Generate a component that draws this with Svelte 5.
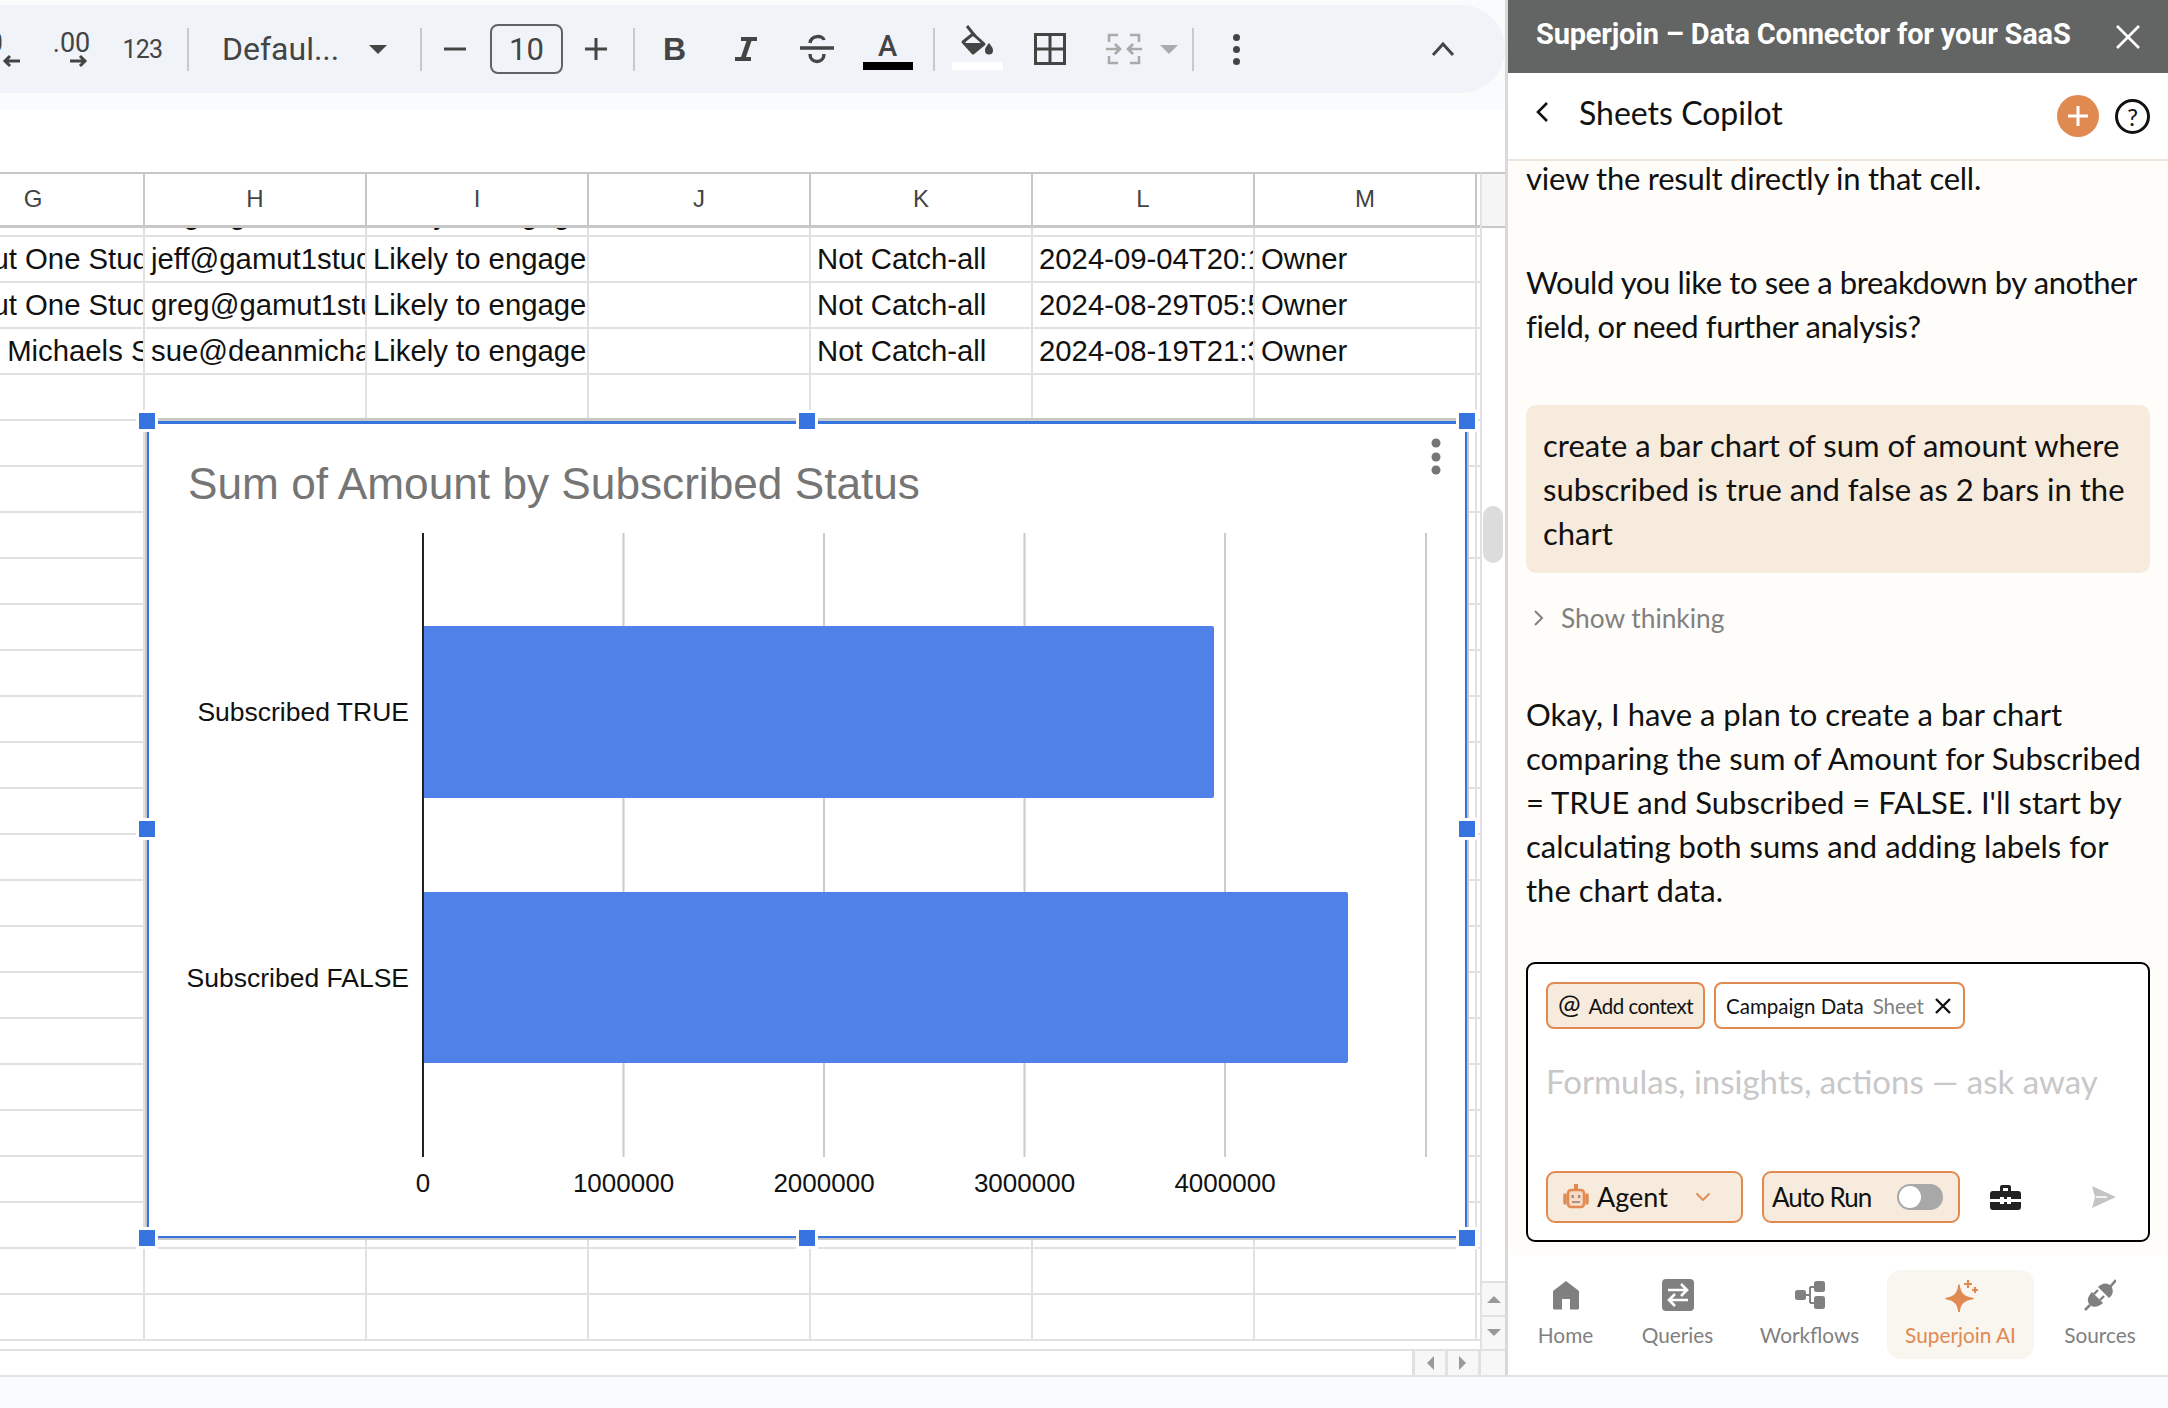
<script>
	const columns = ['G', 'H', 'I', 'J', 'K', 'L', 'M'];
	const rows = [
		['Gamut One Studio', 'jeff@gamut1studio.com', 'Likely to engage', '', 'Not Catch-all', '2024-09-04T20:11:32', 'Owner'],
		['Gamut One Studio', 'greg@gamut1studio.com', 'Likely to engage', '', 'Not Catch-all', '2024-08-29T05:54:10', 'Owner'],
		['Dean Michaels Studio', 'sue@deanmichaels.com', 'Likely to engage', '', 'Not Catch-all', '2024-08-19T21:37:45', 'Owner']
	];
	const cutRow = ['', 'ang@gamut1studio.com', 'Likely to engage', '', '', '', ''];
	const emptyRows = Array.from({ length: 21 }, () => columns.map(() => ''));
	const ticks = [
		{ x: 423, label: '0' },
		{ x: 623.5, label: '1000000' },
		{ x: 824, label: '2000000' },
		{ x: 1024.5, label: '3000000' },
		{ x: 1225, label: '4000000' },
		{ x: 1426, label: '' }
	];
	const bars = [
		{ y: 626, h: 172, w: 791, label: 'Subscribed TRUE' },
		{ y: 892, h: 171, w: 925, label: 'Subscribed FALSE' }
	];
	const handles = [
		[147, 421], [807, 421], [1467, 421],
		[147, 829], [1467, 829],
		[147, 1238], [807, 1238], [1467, 1238]
	];
	const tabs = [
		{ name: 'Home', width: 115 },
		{ name: 'Queries', width: 109 },
		{ name: 'Workflows', width: 155 },
		{ name: 'Superjoin AI', width: 147, active: true },
		{ name: 'Sources', width: 132 }
	];
</script>

<div class="page">
	<div class="top">
		<main class="sheet">
			<div class="toolbar-band">
				<div class="toolbar">
					<div class="tool first">
						<span class="dec">0</span>
						<svg class="dec-arrow" width="20" height="14" viewBox="0 0 20 14"><path d="M19 7H4M9 2 4 7l5 5" fill="none" stroke="#444" stroke-width="3"/></svg>
					</div>
					<div class="tool">
						<div class="dec-stack">
							<span>.00</span>
							<svg width="20" height="14" viewBox="0 0 20 14"><path d="M1 7h15M11 2l5 5-5 5" fill="none" stroke="#444" stroke-width="3"/></svg>
						</div>
					</div>
					<div class="tool num">123</div>
					<span class="sep first-sep"></span>
					<div class="font-select">
						<span>Defaul...</span>
						<i class="caret"></i>
					</div>
					<span class="sep after-font"></span>
					<div class="tool step">
						<svg width="22" height="22" viewBox="0 0 22 22"><path d="M0 11h22" stroke="#444" stroke-width="3"/></svg>
					</div>
					<div class="size-box">10</div>
					<div class="tool step">
						<svg width="24" height="24" viewBox="0 0 24 24"><path d="M1 12h22M12 1v22" stroke="#444" stroke-width="3"/></svg>
					</div>
					<span class="sep after-size"></span>
					<div class="tool bold">B</div>
					<div class="tool">
						<svg width="26" height="28" viewBox="0 0 26 28"><path d="M8 2h16v4h-5.500L13 22h5v4H2v-4h6l5.500-16H8z" fill="#444"/></svg>
					</div>
					<div class="tool">
						<svg width="38" height="36" viewBox="0 0 38 36"><path d="M2 17h34" stroke="#444" stroke-width="3.400"/><path d="M12 12c1-8 13-8 14-3M12 23c0 10 14 10 14 0" fill="none" stroke="#444" stroke-width="3.400"/></svg>
					</div>
					<div class="tool color">
						<span class="letter">A</span>
						<i class="swatch black"></i>
					</div>
					<span class="sep after-color"></span>
					<div class="tool fill">
						<svg width="36" height="38" viewBox="0 0 36 38"><path d="M7 2l8 10" fill="none" stroke="#444" stroke-width="3"/><path d="M13 10l11 10-11 9L3 18z" fill="none" stroke="#444" stroke-width="3" stroke-linejoin="round"/><path d="M3 19h21L13 29z" fill="#444"/><path d="M29 19c-3 4-4 5-4 7.500a4 4 0 0 0 8 0c0-2.500-1-3.500-4-7.500z" fill="#444"/></svg>
						<i class="swatch white"></i>
					</div>
					<div class="tool">
						<svg width="32" height="32" viewBox="0 0 32 32"><path d="M1.500 1.500h29v29h-29zM16 1.500v29M1.500 16h29" fill="none" stroke="#444" stroke-width="3"/></svg>
					</div>
					<div class="merge">
						<svg width="36" height="32" viewBox="0 0 36 32" fill="none" stroke="#aaa" stroke-width="2.600"><path d="M12 2H3v7M3 23v7h9M24 2h9v7M33 23v7h-9M0 16h14M9 11l5 5-5 5M36 16H22M27 11l-5 5 5 5"/></svg>
						<i class="caret light"></i>
					</div>
					<span class="sep after-merge"></span>
					<div class="tool dots"><i></i><i></i><i></i></div>
					<div class="tool collapse">
						<svg width="24" height="16" viewBox="0 0 24 16"><path d="M2 14 12 3l10 11" fill="none" stroke="#444" stroke-width="3"/></svg>
					</div>
				</div>
			</div>

			<div class="grid-area">
				<div class="grid">
					<div class="row head">
						{#each columns as col}
							<div class="cell">{col}</div>
						{/each}
					</div>
					<div class="row cut">
						{#each cutRow as text}
							<div class="cell"><span>{text}</span></div>
						{/each}
					</div>
					{#each rows as row}
						<div class="row">
							{#each row as text}
								<div class="cell">{text}</div>
							{/each}
						</div>
					{/each}
					{#each emptyRows as row}
						<div class="row">
							{#each row as text}
								<div class="cell">{text}</div>
							{/each}
						</div>
					{/each}
				</div>

				<div class="vscroll">
					<div class="track"><i class="thumb"></i></div>
					<div class="vbtn"><i class="tri up"></i></div>
					<div class="vbtn"><i class="tri down"></i></div>
				</div>

				<div class="hscroll">
					<div class="hbtn"><i class="tri left"></i></div>
					<div class="hbtn"><i class="tri right"></i></div>
					<div class="hbtn corner"></div>
				</div>

				<div class="chart">
					<svg width="1316" height="812" viewBox="149 424 1316 812">
						<text x="188" y="499" class="chart-title">Sum of Amount by Subscribed Status</text>
						<circle cx="1436" cy="443" r="4.500" fill="#757575"/>
						<circle cx="1436" cy="457" r="4.500" fill="#757575"/>
						<circle cx="1436" cy="470" r="4.500" fill="#757575"/>
						{#each ticks as tick, i}
							{#if i > 0}
								<line x1={tick.x} x2={tick.x} y1="533" y2="1157" stroke="#ccc" stroke-width="2"/>
							{/if}
							<text x={tick.x} y="1192" text-anchor="middle" class="chart-label">{tick.label}</text>
						{/each}
						{#each bars as bar}
							<rect x="422" y={bar.y} width={bar.w + 1} height={bar.h} rx="2" fill="#4f81e8"/>
							<text x="409" y={bar.y + bar.h / 2 + 9} text-anchor="end" class="chart-cat">{bar.label}</text>
						{/each}
						<line x1="423" x2="423" y1="533" y2="1157" stroke="#222" stroke-width="2"/>
					</svg>
				</div>
				{#each handles as [x, y]}
					<i class="handle" style="left: {x - 8}px; top: {y - 172 - 8}px"></i>
				{/each}
			</div>
		</main>

		<aside class="panel">
			<header class="panel-title">
				<span>Superjoin – Data Connector for your SaaS</span>
				<svg width="26" height="26" viewBox="0 0 26 26"><path d="M2 2l22 22M24 2 2 24" stroke="#fff" stroke-width="2.600"/></svg>
			</header>
			<div class="subhead">
				<svg class="back" width="14" height="22" viewBox="0 0 14 22"><path d="M12 2 3 11l9 9" fill="none" stroke="#111" stroke-width="2.600"/></svg>
				<span class="subhead-title">Sheets Copilot</span>
				<span class="add">
					<svg width="24" height="24" viewBox="0 0 24 24"><path d="M2 12h20M12 2v20" stroke="#fff" stroke-width="3"/></svg>
				</span>
				<span class="help">?</span>
			</div>

			<div class="messages">
				<p class="scrolled">view the result directly in that cell.</p>
				<p class="para">Would you like to see a breakdown by another field, or need further analysis?</p>
				<div class="bubble">create a bar chart of sum of amount where subscribed is true and false as 2 bars in the chart</div>
				<div class="thinking">
					<svg width="12" height="18" viewBox="0 0 12 18"><path d="M2 2l7 7-7 7" fill="none" stroke="#808080" stroke-width="2"/></svg>
					<span>Show thinking</span>
				</div>
				<p class="answer">Okay, I have a plan to create a bar chart comparing the sum of Amount for Subscribed = TRUE and Subscribed = FALSE. I'll start by calculating both sums and adding labels for the chart data.</p>

				<div class="composer">
					<div class="chips">
						<div class="chip tinted">
							<span class="at">@</span>
							<span class="add-context">Add context</span>
						</div>
						<div class="chip source">
							<span>Campaign Data</span>
							<span class="muted">Sheet</span>
							<svg width="16" height="16" viewBox="0 0 16 16"><path d="M1 1l14 14M15 1 1 15" stroke="#111" stroke-width="2.400"/></svg>
						</div>
					</div>
					<div class="placeholder">Formulas, insights, actions — ask away</div>
					<div class="controls">
						<div class="control agent">
							<svg width="26" height="28" viewBox="0 0 26 28"><path d="M13 1v5" stroke="#e08a52" stroke-width="4"/><rect x="5" y="7" width="16" height="17" rx="3" fill="#f6dcc8" stroke="#e08a52" stroke-width="2.600"/><path d="M2 12v8M24 12v8" stroke="#e08a52" stroke-width="3.400" stroke-linecap="round"/><rect x="8.500" y="12" width="2.400" height="3" fill="#a58a75"/><rect x="15" y="12" width="2.400" height="3" fill="#a58a75"/><path d="M9 19h8" stroke="#a58a75" stroke-width="1.800"/></svg>
							<span>Agent</span>
							<svg class="chev" width="16" height="10" viewBox="0 0 16 10"><path d="M1.500 1.500 8 8l6.500-6.500" fill="none" stroke="#e08a52" stroke-width="1.800"/></svg>
						</div>
						<div class="control run">
							<span>Auto Run</span>
							<span class="toggle"><i></i></span>
						</div>
						<svg class="kit" width="31" height="26" viewBox="0 0 31 26"><path d="M10 7V3a2 2 0 0 1 2-2h7a2 2 0 0 1 2 2v4h-3V4h-5v3z" fill="#222"/><path d="M3 7h25a3 3 0 0 1 3 3v5H21v-2h-4v2h-3v-2h-4v2H0v-5a3 3 0 0 1 3-3zM0 18h10v2h4v-2h3v2h4v-2h10v5a3 3 0 0 1-3 3H3a3 3 0 0 1-3-3z" fill="#222"/></svg>
						<svg class="send" width="24" height="24" viewBox="0 0 24 24"><path d="M0 1l24 11L0 23l3-11z" fill="#c4c4c4"/><path d="M4 12h11" stroke="#fff" stroke-width="1.500"/></svg>
					</div>
				</div>
			</div>

			<nav class="tabs">
				{#each tabs as tab}
					<div class="tab" class:active={tab.active} style="width: {tab.width}px">
						<div class="tab-icon">
							{#if tab.name === 'Home'}
								<svg width="28" height="30" viewBox="0 0 28 30"><path d="M14 1 27 11v17a1.500 1.500 0 0 1-1.500 1.500H18V19h-8v10.500H2.500A1.500 1.500 0 0 1 1 28V11z" fill="#808080"/></svg>
							{:else if tab.name === 'Queries'}
								<svg width="32" height="32" viewBox="0 0 32 32"><rect width="32" height="32" rx="4" fill="#808080"/><path d="M6 11h19M19 5l6 6-6 6M26 21H7M13 15l-6 6 6 6" fill="none" stroke="#fff" stroke-width="2.600"/></svg>
							{:else if tab.name === 'Workflows'}
								<svg width="30" height="28" viewBox="0 0 30 28"><rect x="0" y="9" width="11" height="10" rx="2.500" fill="#808080"/><rect x="19" y="0" width="11" height="11" rx="2.500" fill="#808080"/><rect x="19" y="15" width="11" height="13" rx="2.500" fill="#808080"/><path d="M11 14h4M15 6v16M15 6h4M15 22h4" fill="none" stroke="#808080" stroke-width="2"/></svg>
							{:else if tab.name === 'Superjoin AI'}
								<svg width="34" height="34" viewBox="0 0 34 34"><path d="M15 7C16 15 19 19 29 20.500 19 22 16 26 15 34 14 26 11 22 2 20.500 11 19 14 15 15 7z" fill="#e08a52" stroke="#e08a52" stroke-width="1.500" stroke-linejoin="round"/><path d="M24 2v8M20 6h8M31 9v6M28 12h6" stroke="#e08a52" stroke-width="2.200"/></svg>
							{:else}
								<svg width="32" height="32" viewBox="0 0 32 32"><path d="M14 8 25 19C29 16 30 11 27 7 23 3 18 4 14 8z" fill="#808080"/><path d="M26 8l6-7M6 26l-5 5" stroke="#808080" stroke-width="2.600"/><path d="M8 13 19 24C15 28 9 29 6 26 2 22 4 17 8 13z" fill="#808080"/><path d="M10 15l4-4M16 21l4-4" stroke="#808080" stroke-width="2.400"/></svg>
							{/if}
						</div>
						<span>{tab.name}</span>
					</div>
				{/each}
			</nav>
		</aside>
	</div>
	<footer class="status"></footer>
</div>

<style>
	:global(body) {
		margin: 0;
		background: #f9fbfd;
	}

	.page {
		width: 2168px;
		height: 1408px;
		display: flex;
		flex-direction: column;
		overflow: hidden;
		font-family: "Liberation Sans", Arial, sans-serif;
	}

	.top {
		display: flex;
		height: 1375px;
	}

	.sheet {
		width: 1505px;
		flex-shrink: 0;
		background: #fff;
		overflow: hidden;
		display: flex;
		flex-direction: column;
	}

	.toolbar-band {
		height: 110px;
		background: #f9fbfd;
		padding-top: 5px;
		box-sizing: border-box;
		margin-bottom: 62px;
		flex-shrink: 0;
	}

	.toolbar {
		height: 88px;
		background: #f0f4f9;
		border-radius: 0 44px 44px 0;
		display: flex;
		align-items: center;
		color: #444;
	}

	.tool {
		width: 71px;
		height: 60px;
		flex-shrink: 0;
		display: flex;
		align-items: center;
		justify-content: center;
		position: relative;
	}

	.tool.first {
		margin-left: -35px;
	}

	.dec {
		position: absolute;
		right: 33px;
		top: 8px;
		font: 27px Roboto, sans-serif;
	}

	.dec-arrow {
		position: absolute;
		right: 15px;
		bottom: 11px;
	}

	.dec-stack {
		display: flex;
		flex-direction: column;
		align-items: flex-end;
		font: 27px/26px Roboto, sans-serif;
	}

	.dec-stack svg {
		margin-top: -2px;
		margin-right: 1px;
	}

	.num {
		font: 25px Roboto, sans-serif;
		letter-spacing: -0.8px;
	}

	.sep {
		width: 2px;
		height: 43px;
		background: #c7c9cc;
		flex-shrink: 0;
	}

	.first-sep {
		margin: 0 9px;
	}

	.after-font {
		margin-left: 18px;
	}

	.after-size {
		margin-left: 4px;
	}

	.after-color {
		margin-left: 10px;
	}

	.after-merge {
		margin-left: 7px;
	}

	.font-select {
		width: 204px;
		flex-shrink: 0;
		padding-left: 24px;
		box-sizing: border-box;
		display: flex;
		align-items: center;
		justify-content: space-between;
		padding-right: 15px;
		font: 32px Roboto, sans-serif;
	}

	.caret {
		width: 0;
		height: 0;
		border-left: 9px solid transparent;
		border-right: 9px solid transparent;
		border-top: 9px solid #444;
	}

	.caret.light {
		border-top-color: #aaa;
	}

	.tool.step {
		width: 66px;
	}

	.size-box {
		width: 73px;
		height: 50px;
		margin-left: 2px;
		box-sizing: border-box;
		border: 2px solid #5f6368;
		border-radius: 8px;
		display: flex;
		align-items: center;
		justify-content: center;
		font: 31px Roboto, sans-serif;
		flex-shrink: 0;
	}

	.bold {
		margin-left: 4px;
		font: 700 32px "Liberation Sans", sans-serif;
	}

	.color {
		flex-direction: column;
		justify-content: flex-start;
	}

	.letter {
		font: 500 29px/26px Roboto, sans-serif;
		margin-top: 14px;
	}

	.swatch {
		width: 50px;
		height: 8px;
		display: block;
	}

	.swatch.black {
		background: #000;
		margin-top: 3px;
	}

	.swatch.white {
		background: #fff;
		position: absolute;
		bottom: 9px;
		left: 10px;
		width: 51px;
	}

	.tool.fill {
		width: 72px;
		margin-left: 7px;
		align-items: flex-start;
	}

	.tool.fill svg {
		margin-top: 5px;
	}

	.merge {
		width: 100px;
		flex-shrink: 0;
		display: flex;
		align-items: center;
		gap: 18px;
		padding-left: 21px;
		box-sizing: border-box;
	}

	.dots {
		width: 84px;
		flex-direction: column;
		gap: 5px;
	}

	.dots i {
		width: 7px;
		height: 7px;
		border-radius: 50%;
		background: #444;
	}

	.collapse {
		margin-left: auto;
		margin-right: 27px;
	}

	.grid-area {
		position: relative;
		flex: 1;
		min-height: 0;
		overflow: hidden;
		display: grid;
		grid-template-columns: 1482px 23px;
		grid-template-rows: 1fr 26px;
	}

	.grid {
		margin-left: -77px;
		overflow: hidden;
		border-right: 2px solid #e1e1e1;
		border-top: 2px solid #c7c7c7;
		font-size: 29.300px;
		color: #111;
	}

	.row {
		display: grid;
		grid-template-columns: repeat(7, 222px);
		height: 46px;
		box-sizing: border-box;
		border-bottom: 2px solid #e1e1e1;
	}

	.cell {
		padding-left: 6px;
		line-height: 44px;
		white-space: nowrap;
		overflow: hidden;
		box-sizing: border-box;
		border-right: 2px solid #e1e1e1;
	}

	.row.head {
		height: 54px;
		border-bottom: 3px solid #c7c7c7;
	}

	.head .cell {
		padding: 0;
		text-align: center;
		line-height: 50px;
		font-size: 24px;
		color: #444;
		border-right-color: #c7c7c7;
	}

	.row.cut {
		height: 9px;
		border-bottom-width: 2px;
	}

	.cut .cell span {
		display: block;
		margin-top: -36px;
	}

	.vscroll {
		grid-column: 2;
		grid-row: 1;
		display: flex;
		flex-direction: column;
		border-top: 2px solid #c7c7c7;
	}

	.track {
		flex: 1;
		position: relative;
	}

	.track::before {
		content: "";
		display: block;
		height: 52px;
		background: #f5f5f5;
		border-bottom: 2px solid #c7c7c7;
	}

	.thumb {
		position: absolute;
		left: 1px;
		top: 332px;
		width: 20px;
		height: 57px;
		border-radius: 10px;
		background: #dcdcdc;
	}

	.vbtn {
		height: 34px;
		background: #f7f7f7;
		border-top: 2px solid #e1e1e1;
		box-sizing: border-box;
		display: flex;
		align-items: center;
		justify-content: center;
	}

	.hscroll {
		grid-column: 1 / 3;
		grid-row: 2;
		border-top: 2px solid #e1e1e1;
		display: flex;
		justify-content: flex-end;
		box-sizing: border-box;
	}

	.hbtn {
		width: 33px;
		background: #f7f7f7;
		border-left: 3px solid #e1e1e1;
		box-sizing: border-box;
		display: flex;
		align-items: center;
		justify-content: center;
	}

	.hbtn.corner {
		width: 27px;
	}

	.tri {
		width: 0;
		height: 0;
		border: 7px solid transparent;
	}

	.tri.up {
		border-bottom-color: #999;
		margin-top: -6px;
	}

	.tri.down {
		border-top-color: #999;
		margin-top: 6px;
	}

	.tri.left {
		border-right-color: #999;
		margin-left: -6px;
	}

	.tri.right {
		border-left-color: #999;
		margin-left: 6px;
	}

	.chart {
		position: absolute;
		left: 145px;
		top: 246px;
		width: 1324px;
		height: 822px;
		box-sizing: border-box;
		padding: 3px 2px 2px;
		background: #fff;
		border-style: solid;
		border-width: 3px 2px 2px;
		border-color: #c8c8c8;
	}

	.chart::before {
		content: "";
		position: absolute;
		inset: 0;
		border: 2px solid #3874e0;
		border-top-width: 3px;
		pointer-events: none;
	}

	.chart svg {
		display: block;
	}

	.chart-title {
		font-size: 44.200px;
		fill: #757575;
	}

	.chart-label {
		font-size: 26px;
		fill: #111;
	}

	.chart-cat {
		font-size: 26.500px;
		fill: #111;
	}

	.handle {
		position: absolute;
		width: 16px;
		height: 16px;
		background: #3874e0;
		outline: 3px solid #fff;
	}

	.panel {
		width: 663px;
		flex-shrink: 0;
		box-sizing: border-box;
		border-left: 3px solid #d9d9d9;
		background: #fff;
		display: flex;
		flex-direction: column;
		font-family: Lato, sans-serif;
		color: #111;
	}

	.panel-title {
		height: 73px;
		flex-shrink: 0;
		box-sizing: border-box;
		background: #636564;
		display: flex;
		align-items: center;
		justify-content: space-between;
		padding: 0 27px 5px 28px;
		font: 700 29px Roboto, sans-serif;
		color: #fff;
		letter-spacing: -0.2px;
	}

	.panel-title svg {
		margin-top: 5px;
	}

	.subhead {
		height: 88px;
		flex-shrink: 0;
		display: flex;
		align-items: center;
		box-sizing: border-box;
		border-bottom: 2px solid #eee6dd;
		padding-left: 27px;
	}

	.back {
		margin-top: -8px;
	}

	.subhead-title {
		margin-left: 30px;
		font-size: 32px;
		margin-top: -8px;
		flex: 1;
	}

	.add {
		width: 42px;
		height: 42px;
		border-radius: 50%;
		background: #e08a52;
		display: flex;
		align-items: center;
		justify-content: center;
	}

	.help {
		width: 35px;
		height: 35px;
		box-sizing: border-box;
		margin: 0 18px 0 16px;
		border: 3px solid #111;
		border-radius: 50%;
		display: flex;
		align-items: center;
		justify-content: center;
		font-size: 24px;
	}

	.messages {
		flex: 1;
		min-height: 0;
		overflow: hidden;
		background: #fffdfa;
		padding: 0 18px;
		font-size: 31px;
		line-height: 44px;
	}

	.messages p {
		margin: 0;
	}

	.messages .scrolled {
		margin-top: -5px;
		letter-spacing: -0.25px;
	}

	.messages .para {
		margin-top: 60px;
		letter-spacing: -0.4px;
	}

	.bubble {
		margin-top: 57px;
		background: #f6ebdd;
		border-radius: 10px;
		padding: 18px 16px 18px 17px;
	}

	.thinking {
		margin-top: 27px;
		height: 36px;
		display: flex;
		align-items: center;
		gap: 16px;
		padding-left: 7px;
		font-size: 26.300px;
		color: #808080;
	}

	.messages .answer {
		margin-top: 56px;
	}

	.composer {
		margin-top: 50px;
		height: 280px;
		box-sizing: border-box;
		border: 2px solid #000;
		border-radius: 9px;
		background: #fff;
		padding: 18px;
	}

	.chips {
		display: flex;
		gap: 9px;
	}

	.chip {
		height: 47px;
		box-sizing: border-box;
		border: 2px solid #e08a52;
		border-radius: 8px;
		display: flex;
		align-items: center;
		gap: 8px;
		padding: 0 10px;
		font-size: 20.500px;
		background: #fff;
		white-space: nowrap;
	}

	.chip.tinted {
		background: #f6ebdd;
	}

	.chip.source {
		padding-right: 12px;
	}

	.add-context {
		letter-spacing: -0.5px;
	}

	.chip .at {
		font-size: 27px;
		line-height: 1;
		margin-top: -4px;
	}

	.chip .muted {
		color: #808080;
		margin-left: 1px;
	}

	.chip svg {
		margin-left: 3px;
	}

	.placeholder {
		margin-top: 30px;
		color: #c8c8c8;
		font-size: 33px;
	}

	.controls {
		margin-top: 68px;
		display: flex;
		align-items: center;
	}

	.control {
		height: 52px;
		box-sizing: border-box;
		border: 2px solid #e08a52;
		border-radius: 9px;
		background: #f6ebdd;
		display: flex;
		align-items: center;
		flex-shrink: 0;
		font-size: 27px;
	}

	.agent {
		width: 197px;
		padding-left: 15px;
		gap: 8px;
	}

	.agent .chev {
		margin-left: auto;
		margin-right: 30px;
	}

	.run {
		width: 198px;
		margin-left: 19px;
		padding-left: 8px;
		justify-content: space-between;
		padding-right: 15px;
		font-size: 26px;
		letter-spacing: -1px;
	}

	.toggle {
		width: 46px;
		height: 26px;
		box-sizing: border-box;
		border-radius: 13px;
		background: #a8a8a8;
		border: 2px solid #a8a8a8;
		display: block;
	}

	.toggle i {
		display: block;
		width: 22px;
		height: 22px;
		border-radius: 50%;
		background: #fff;
	}

	.kit {
		margin-left: 30px;
	}

	.send {
		margin-left: 71px;
	}

	.tabs {
		height: 120px;
		flex-shrink: 0;
		box-sizing: border-box;
		padding-top: 15px;
		padding-bottom: 16px;
		display: flex;
		background: #fff;
	}

	.tab {
		flex-shrink: 0;
		display: flex;
		flex-direction: column;
		align-items: center;
		border-radius: 14px;
		font-size: 20.800px;
		color: #808080;
	}

	.tab.active {
		background: #f9f5ef;
		color: #e08a52;
	}

	.tab-icon {
		height: 34px;
		margin-top: 8px;
		margin-bottom: 10px;
		display: flex;
		align-items: center;
		justify-content: center;
	}

	.status {
		height: 33px;
		box-sizing: border-box;
		border-top: 2px solid #e1e3e6;
		background: #f9fbfd;
	}
</style>
